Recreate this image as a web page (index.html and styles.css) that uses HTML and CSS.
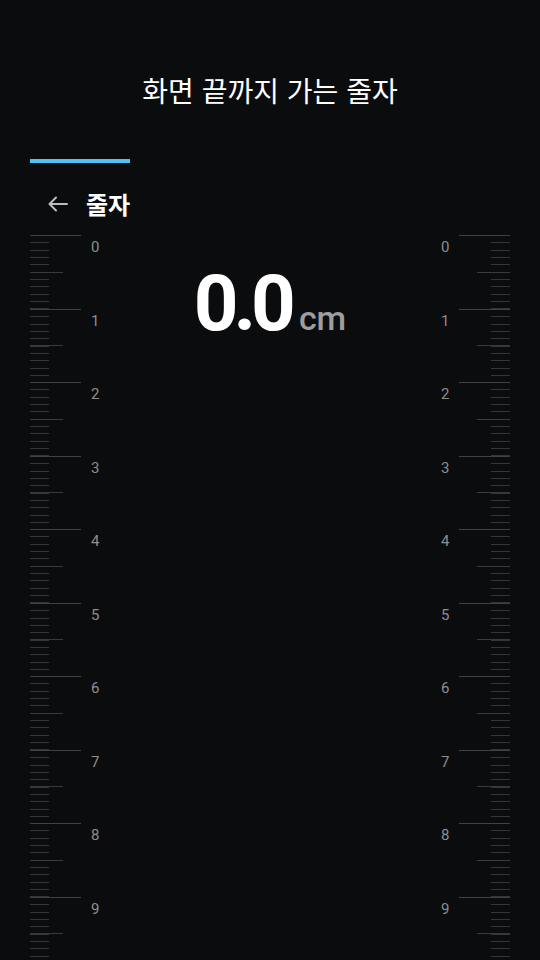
FILE: index.html
```html
<!DOCTYPE html>
<html lang="ko">
<head>
<meta charset="utf-8">
<title>화면 끝까지 가는 줄자</title>
<link rel="stylesheet" href="styles.css">
</head>
<body>
<div class="app">
  <h1 class="title">화면 끝까지 가는 줄자</h1>
  <div class="tab"></div>
  <div class="toolbar">
    <svg class="back" width="24" height="24" viewBox="0 0 24 24" aria-hidden="true">
      <path d="M21 12H4M10 5.5L3.5 12L10 18.5" fill="none" stroke="#bdbdbd" stroke-width="2" stroke-linecap="round" stroke-linejoin="round"/>
    </svg>
    <span class="name">줄자</span>
  </div>
  <div class="main">
    <div class="ruler left">
      <div class="cm"><span class="lab">0</span></div>
      <div class="cm"><span class="lab">1</span></div>
      <div class="cm"><span class="lab">2</span></div>
      <div class="cm"><span class="lab">3</span></div>
      <div class="cm"><span class="lab">4</span></div>
      <div class="cm"><span class="lab">5</span></div>
      <div class="cm"><span class="lab">6</span></div>
      <div class="cm"><span class="lab">7</span></div>
      <div class="cm"><span class="lab">8</span></div>
      <div class="cm"><span class="lab">9</span></div>
    </div>
    <div class="center">
      <div class="readout"><span class="value">0.0</span><span class="unit">cm</span></div>
    </div>
    <div class="ruler right">
      <div class="cm"><span class="lab">0</span></div>
      <div class="cm"><span class="lab">1</span></div>
      <div class="cm"><span class="lab">2</span></div>
      <div class="cm"><span class="lab">3</span></div>
      <div class="cm"><span class="lab">4</span></div>
      <div class="cm"><span class="lab">5</span></div>
      <div class="cm"><span class="lab">6</span></div>
      <div class="cm"><span class="lab">7</span></div>
      <div class="cm"><span class="lab">8</span></div>
      <div class="cm"><span class="lab">9</span></div>
    </div>
  </div>
</div>
</body>
</html>
```
FILE: styles.css
```css
html, body {
  margin: 0;
  padding: 0;
  background: #0b0c0e;
}
body {
  font-family: Roboto, "Noto Sans CJK KR", sans-serif;
  color: #ffffff;
}
.app {
  width: 540px;
  height: 960px;
  overflow: hidden;
  display: flex;
  flex-direction: column;
}
.title {
  margin: 70px 0 0;
  height: 40px;
  line-height: 40px;
  text-align: center;
  font-family: "Noto Sans CJK KR", sans-serif;
  font-size: 28px;
  font-weight: 400;
  color: #ffffff;
}
.tab {
  margin: 49px 0 0 30px;
  width: 100px;
  height: 4px;
  background: #4fc3f7;
  flex: none;
}
.toolbar {
  margin-top: 17px;
  height: 48px;
  display: flex;
  align-items: center;
  padding-left: 46px;
  gap: 16px;
  flex: none;
}
.back {
  display: block;
}
.name {
  font-family: "Noto Sans CJK KR", sans-serif;
  font-size: 24px;
  font-weight: 700;
  color: #ffffff;
  line-height: 32px;
}
.main {
  margin-top: 7px;
  padding: 0 30px;
  display: flex;
  flex: 1;
  min-height: 0;
}
.ruler {
  width: 80px;
  flex: none;
  display: flex;
  flex-direction: column;
}
.center {
  flex: 1;
  display: flex;
  justify-content: center;
  align-items: flex-start;
}
.cm {
  height: 73.5px;
  flex: none;
  box-sizing: border-box;
  padding-top: 3px;
  background-repeat: no-repeat;
}
.left .cm {
  padding-left: 61px;
  background-image:
    linear-gradient(#414141, #414141),
    linear-gradient(#3a3a3a, #3a3a3a),
    repeating-linear-gradient(to bottom, #363636 0, #363636 1px, transparent 1px, transparent 7.35px);
  background-size: 51px 1px, 33px 1px, 19px 100%;
  background-position: 0 0, 0 36.75px, 0 0;
}
.right .cm {
  padding-left: 11px;
  background-image:
    linear-gradient(#414141, #414141),
    linear-gradient(#3a3a3a, #3a3a3a),
    repeating-linear-gradient(to bottom, #363636 0, #363636 1px, transparent 1px, transparent 7.35px);
  background-size: 51px 1px, 33px 1px, 19px 100%;
  background-position: 100% 0, 100% 36.75px, 100% 0;
}
.lab {
  display: block;
  font-size: 15px;
  line-height: 18px;
  color: #8e8e8e;
}
.readout {
  margin-top: 30px;
  display: flex;
  align-items: baseline;
  gap: 8px;
}
.value {
  font-size: 78px;
  line-height: 1;
  font-weight: 700;
  color: #ffffff;
  letter-spacing: -5px;
}
.unit {
  font-size: 34px;
  font-weight: 500;
  color: #9e9e9e;
}
```
